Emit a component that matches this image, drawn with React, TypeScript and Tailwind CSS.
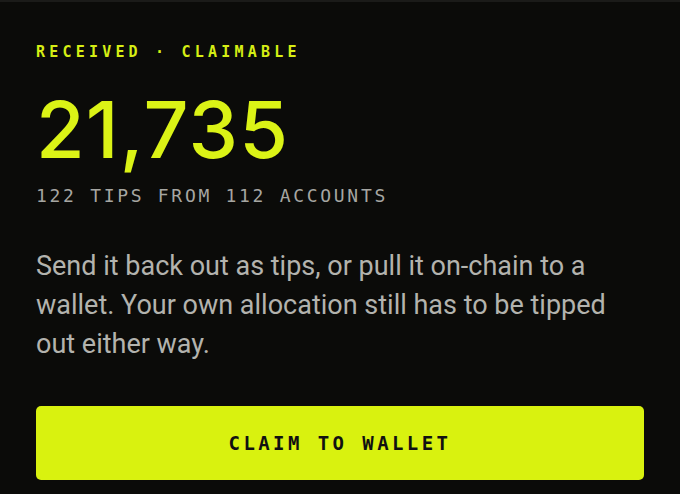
export default function App() {
  return (
    <div className="min-h-screen w-full bg-[#0b0b09] border-t-2 border-[#1b1b19] px-9 pt-[38px] font-['Inter',sans-serif]">
      <div className="font-['DejaVu_Sans_Mono',monospace] text-[15px] leading-6 font-semibold tracking-[0.28em] text-[#d6ee14]">
        RECEIVED · CLAIMABLE
      </div>

      <div className="mt-[25px] text-[79px] leading-[80px] font-medium tracking-[0.015em] text-[#dbf316]">
        21,735
      </div>

      <div className="mt-[15px] font-['DejaVu_Sans_Mono',monospace] text-[18px] leading-6 tracking-[0.15em] text-[#a6a6a2]">
        122 TIPS FROM 112 ACCOUNTS
      </div>

      <p className="mt-[39px] font-['Roboto',sans-serif] text-[27px] leading-[39px] text-[#b3b3ae] max-w-[590px]">
        Send it back out as tips, or pull it on-chain to a wallet. Your own allocation still has to be tipped out either way.
      </p>

      <button className="mt-[42px] w-full h-[74px] rounded-[5px] bg-[#d9f20f] font-['DejaVu_Sans_Mono',monospace] text-[19px] font-bold tracking-[0.18em] text-[#111] flex items-center justify-center">
        CLAIM TO WALLET
      </button>
    </div>
  );
}
